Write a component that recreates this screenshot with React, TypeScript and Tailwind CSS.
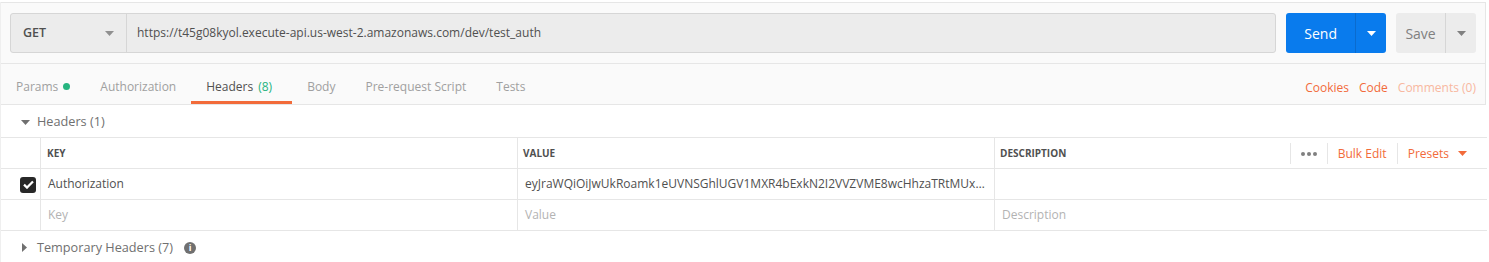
import React from 'react';

const font = { fontFamily: '"Open Sans", "Liberation Sans", sans-serif' };

function Caret({ className = '' }: { className?: string }) {
  return (
    <svg width="9" height="5" viewBox="0 0 9 5" className={className}>
      <path d="M0 0h9L4.5 5z" fill="currentColor" />
    </svg>
  );
}

function Tab({ label, active, extra }: { label: string; active?: boolean; extra?: React.ReactNode }) {
  return (
    <div
      className={
        'h-full flex items-center pl-[15px] border-b-[3px] ' +
        (active ? 'pr-[20px] border-[#f26b3a] text-[#505050]' : 'pr-[15px] border-transparent text-[#a0a0a0]')
      }
    >
      {label}
      {extra}
    </div>
  );
}

export default function App() {
  return (
    <div className="w-[1489px] h-[262px] bg-white text-[12px] overflow-hidden" style={font}>
      <div className="w-[1486px] border-l border-[#efefef]">
        {/* request bar */}
        <div className="mt-[2px] border-t border-r border-[#e6e6e6] bg-[#fafafa]">
          <div className="h-[61px] border-b border-[#e6e6e6] flex items-start pt-[10px] pl-[9px] pr-[9px]">
            <div className="flex h-[40px] w-[1267px] rounded-[3px] border border-[#d6d6d6] bg-[#ececec]">
              <div className="w-[116px] shrink-0 flex items-center justify-between pl-[12px] pr-[12px] border-r border-[#d6d6d6] text-[#505050] font-semibold text-[12.5px]">
                GET
                <Caret className="text-[#909090]" />
              </div>
              <div className="flex items-center pl-[10px] text-[#505050] text-[12px]">
                https://t45g08kyol.execute-api.us-west-2.amazonaws.com/dev/test_auth
              </div>
            </div>
            <div className="ml-[10px] flex h-[40px] w-[100px] rounded-[3px] bg-[#097bed] text-white">
              <div className="w-[70px] flex items-center justify-center text-[14px] pt-[1px] border-r border-[#0a6bce]">Send</div>
              <div className="flex-1 flex items-center justify-center">
                <Caret />
              </div>
            </div>
            <div className="ml-[10px] flex h-[40px] w-[80px] rounded-[3px] bg-[#ececec] text-[#808080]">
              <div className="w-[50px] flex items-center justify-center text-[14px] pt-[1px] border-r border-[#d6d6d6]">Save</div>
              <div className="flex-1 flex items-center justify-center">
                <Caret className="text-[#808080]" />
              </div>
            </div>
          </div>
          {/* tabs */}
          <div className="h-[41px] border-b border-[#e6e6e6] flex items-stretch">
            <div className="flex items-stretch h-[40px] pt-[8px] text-[12px]">
              <Tab label="Params" extra={<span className="ml-[5px] inline-block w-[7px] h-[7px] rounded-full bg-[#26b47f]" />} />
              <Tab label="Authorization" />
              <Tab label="Headers" active extra={<span className="ml-[5px] text-[#26b47f]">(8)</span>} />
              <Tab label="Body" />
              <Tab label="Pre-request Script" />
              <Tab label="Tests" />
            </div>
            <div className="ml-auto flex items-center h-[40px] pt-[7px] pr-[9px] gap-[10px] text-[12px]">
              <span className="text-[#f26b3a]">Cookies</span>
              <span className="text-[#f26b3a]">Code</span>
              <span className="text-[#f8b8a0]">Comments (0)</span>
            </div>
          </div>
        </div>

        {/* headers section */}
        <div className="h-[32px] flex items-center pl-[20px] pt-[2px] text-[#707070] text-[12.7px]">
          <Caret className="text-[#707070] mr-[7px]" />
          Headers (1)
        </div>
        <div className="w-[1486px] text-[#505050]">
          <div className="flex h-[32px] border-t border-b border-[#e6e6e6]">
            <div className="w-[40px] shrink-0 border-r border-[#e6e6e6]" />
            <div className="w-[477px] shrink-0 border-r border-[#e6e6e6] flex items-center pl-[6px] font-bold text-[10px]">KEY</div>
            <div className="w-[477px] shrink-0 border-r border-[#e6e6e6] flex items-center pl-[5px] font-bold text-[10px]">VALUE</div>
            <div className="flex-1 flex items-center pl-[5px] font-bold text-[10px]">
              DESCRIPTION
              <div className="ml-auto flex items-center h-[21px] mt-[1px] mr-[20px]">
                <div className="h-full border-l border-[#e6e6e6] w-[37px] flex items-center justify-center gap-[2px]">
                  <span className="w-[4px] h-[4px] rounded-full bg-[#808080]" />
                  <span className="w-[4px] h-[4px] rounded-full bg-[#808080]" />
                  <span className="w-[4px] h-[4px] rounded-full bg-[#808080]" />
                </div>
                <div className="h-full border-l border-[#e6e6e6] w-[70px] flex items-center justify-center font-normal text-[12px] text-[#f26b3a]">
                  Bulk Edit
                </div>
                <div className="h-full border-l border-[#e6e6e6] pl-[10px] flex items-center font-normal text-[12px] text-[#f26b3a]">
                  Presets
                  <Caret className="ml-[9px] text-[#f26b3a]" />
                </div>
              </div>
            </div>
          </div>
          <div className="flex h-[31px] border-b border-[#e6e6e6]">
            <div className="w-[40px] shrink-0 border-r border-[#e6e6e6] flex items-center pl-[19px] pt-[1px]">
              <div className="w-[16px] h-[16px] rounded-[3px] bg-[#282828] flex items-center justify-center">
                <svg width="11" height="9" viewBox="0 0 11 9">
                  <path d="M1 4.6l3 3L10 1.4" stroke="white" strokeWidth="2.2" fill="none" />
                </svg>
              </div>
            </div>
            <div className="w-[477px] shrink-0 border-r border-[#e6e6e6] flex items-center pl-[7px] text-[12px]">Authorization</div>
            <div className="w-[477px] shrink-0 border-r border-[#e6e6e6] flex items-center pl-[7px] pr-[9px] text-[12px] min-w-0">
              <span className="truncate">eyJraWQiOiJwUkRoamk1eUVNSGhlUGV1MXR4bExkN2I2VVZVME8wcHhzaTRtMUxmZ0dqTWs9IiwiYWxnIjoiUlMyNTYifQ</span>
            </div>
            <div className="flex-1" />
          </div>
          <div className="flex h-[31px] border-b border-[#e6e6e6] text-[#b3b3b3] text-[12px]">
            <div className="w-[40px] shrink-0 border-r border-[#e6e6e6]" />
            <div className="w-[477px] shrink-0 border-r border-[#e6e6e6] flex items-center pl-[7px]">Key</div>
            <div className="w-[477px] shrink-0 border-r border-[#e6e6e6] flex items-center pl-[7px]">Value</div>
            <div className="flex-1 flex items-center pl-[7px]">Description</div>
          </div>
        </div>
        <div className="h-[32px] flex items-center pl-[21px] pt-[1px] text-[#707070] text-[12.7px]">
          <svg width="5" height="9" viewBox="0 0 5 9" className="mr-[10px] text-[#707070]">
            <path d="M0 0v9l5-4.5z" fill="currentColor" />
          </svg>
          Temporary Headers (7)
          <span className="ml-[11px] w-[12px] h-[12px] rounded-full bg-[#707070] text-white text-[9px] font-bold flex items-center justify-center leading-none">
            i
          </span>
        </div>
      </div>
    </div>
  );
}
